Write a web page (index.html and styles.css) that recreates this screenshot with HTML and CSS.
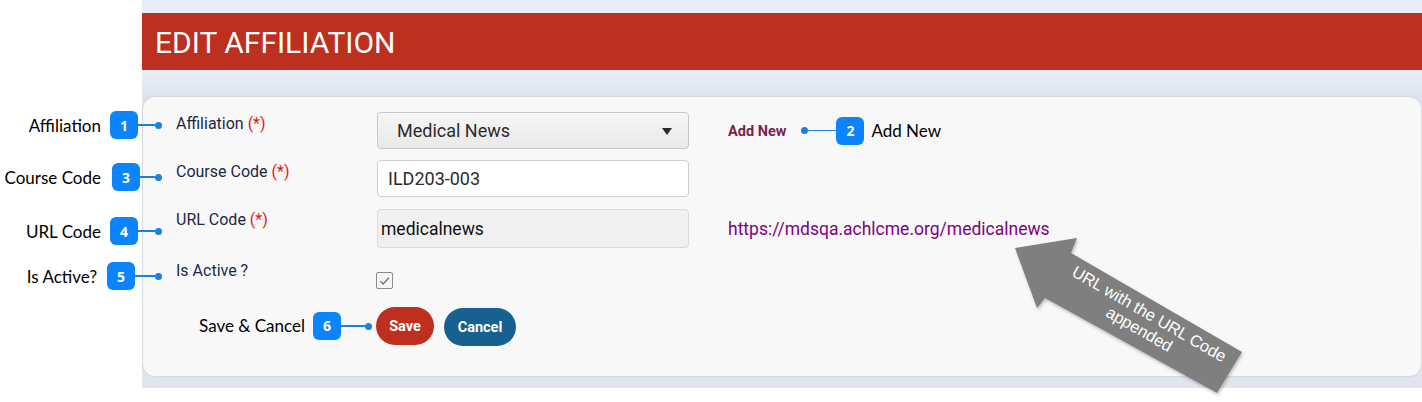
FILE: index.html
```html
<!DOCTYPE html>
<html lang="en">
<head>
<meta charset="utf-8">
<title>Edit Affiliation</title>
<link rel="stylesheet" href="styles.css">
</head>
<body>
<div class="page">
  <div class="gutter"></div>
  <div class="app">
    <div class="header">EDIT AFFILIATION</div>
    <div class="card">
      <div class="row row-aff">
        <div class="callout callout-1">
          <span class="callout-text">Affiliation</span>
          <span class="badge">1</span>
          <span class="line line-17"></span>
          <span class="dot"></span>
        </div>
        <div class="label">Affiliation <span class="req">(*)</span></div>
        <div class="field">
          <div class="select">
            <span>Medical News</span>
            <span class="caret"></span>
          </div>
        </div>
        <div class="extra">
          <a class="add-new">Add New</a>
          <span class="dot dot-gap"></span>
          <span class="line line-28"></span>
          <span class="badge">2</span>
          <span class="callout-text callout-after">Add New</span>
        </div>
      </div>

      <div class="row row-course">
        <div class="callout callout-3">
          <span class="callout-text">Course Code</span>
          <span class="badge">3</span>
          <span class="line line-15"></span>
          <span class="dot"></span>
        </div>
        <div class="label">Course Code <span class="req">(*)</span></div>
        <div class="field">
          <div class="input">ILD203-003</div>
        </div>
      </div>

      <div class="row row-url">
        <div class="callout callout-4">
          <span class="callout-text">URL Code</span>
          <span class="badge">4</span>
          <span class="line line-17"></span>
          <span class="dot"></span>
        </div>
        <div class="label label-url">URL Code <span class="req">(*)</span></div>
        <div class="field">
          <div class="input input-readonly">medicalnews</div>
        </div>
        <div class="extra extra-url">
          <a class="url-link">https://mdsqa.achlcme.org/medicalnews</a>
        </div>
      </div>

      <div class="row row-active">
        <div class="callout callout-5">
          <span class="callout-text">Is Active?</span>
          <span class="badge">5</span>
          <span class="line line-20"></span>
          <span class="dot"></span>
        </div>
        <div class="label">Is Active ?</div>
        <div class="field">
          <span class="checkbox">
            <svg width="16" height="16" viewBox="0 0 16 16"><path d="M3.5 8.2 L6.6 11.2 L12.6 4.6" fill="none" stroke="#7a7a7a" stroke-width="1.6"/></svg>
          </span>
        </div>
      </div>

      <div class="row row-actions">
        <div class="label label-actions">
          <span class="callout-text">Save &amp; Cancel</span>
          <span class="badge badge-6">6</span>
          <span class="line line-24"></span>
          <span class="dot"></span>
        </div>
        <div class="buttons">
          <button class="btn btn-save">Save</button>
          <button class="btn btn-cancel">Cancel</button>
        </div>
      </div>
    </div>
  </div>

  <svg class="arrow" width="270" height="185" viewBox="0 0 270 185">
    <defs>
      <filter id="sh" x="-10%" y="-10%" width="120%" height="120%">
        <feDropShadow dx="1" dy="2" stdDeviation="1.5" flood-color="#000" flood-opacity="0.25"/>
      </filter>
    </defs>
    <polygon points="15,28 77,18 71,33 242,132 217,173 45,78 37,88" fill="#7f7f7f" filter="url(#sh)"/>
    <g transform="translate(144,101) rotate(30)" fill="#ffffff" font-family="'Liberation Sans', Arial, sans-serif" font-size="16.5" text-anchor="middle">
      <text x="1" y="-3">URL with the URL Code</text>
      <text x="0" y="15">appended</text>
    </g>
  </svg>
</div>
</body>
</html>
```

FILE: styles.css
```css
* { box-sizing: border-box; }

html, body {
  margin: 0;
  padding: 0;
  background: #ffffff;
}

body {
  width: 1422px;
  height: 402px;
  font-family: Roboto, "Liberation Sans", Arial, sans-serif;
  overflow: hidden;
}

.page {
  position: relative;
  display: flex;
  width: 1422px;
  height: 402px;
}

.gutter {
  width: 142px;
  flex: none;
}

.app {
  width: 1280px;
  height: 388px;
  flex: none;
  padding-top: 13px;
  background: linear-gradient(to bottom, #e8eef7 0px, #e8eef7 72px, #dfe3eb 97px, #e1e5ed 388px);
  display: flex;
  flex-direction: column;
}

.header {
  height: 57px;
  background: #bd2f1e;
  color: #ffffff;
  font-size: 30px;
  padding-left: 13px;
  display: flex;
  align-items: center;
  padding-top: 1px;
}

.card {
  margin: 27px 1px 0 1px;
  height: 279px;
  background: #f8f8f8;
  border-radius: 12px;
  box-shadow: 0 0 2px rgba(0, 0, 0, 0.18);
  padding: 15px 0 0 33px;
}

.row {
  position: relative;
  display: flex;
  align-items: flex-start;
}

.row-course { margin-top: 11px; }
.row-url { margin-top: 12px; }
.row-active { margin-top: 11px; }
.row-actions { margin-top: 17px; align-items: center; }

.label {
  width: 201px;
  flex: none;
  font-size: 16px;
  line-height: 20px;
  color: #1b2844;
  padding-top: 2px;
}

.label-url { padding-top: 1px; }

.req { color: #e3141b; }

.field {
  width: 312px;
  flex: none;
}

.select {
  height: 37px;
  border: 1px solid #c9c9c9;
  border-radius: 4px;
  background: linear-gradient(to bottom, #f6f6f6, #e9e9e9);
  display: flex;
  align-items: center;
  justify-content: space-between;
  padding: 0 16px 0 19px;
  font-size: 18px;
  color: #2b2b2b;
}

.caret {
  width: 0;
  height: 0;
  border-left: 5px solid transparent;
  border-right: 5px solid transparent;
  border-top: 7px solid #2a2a2a;
  margin-top: 2px;
}

.input {
  height: 37px;
  border: 1px solid #cfcfcf;
  border-radius: 4px;
  background: #ffffff;
  display: flex;
  align-items: center;
  padding-left: 10px;
  font-size: 18px;
  color: #2b2b2b;
}

.input-readonly {
  height: 39px;
  background: #f0f0f0;
  border-color: #dadada;
  padding-left: 3px;
  font-size: 17.5px;
  color: #111111;
}

.checkbox {
  display: flex;
  align-items: center;
  justify-content: center;
  width: 17px;
  height: 17px;
  margin: 13px 0 0 -1px;
  border: 1.5px solid #8c8c8c;
  border-radius: 2px;
  background: #f6f6f6;
}

.extra {
  margin-left: 39px;
  display: flex;
  align-items: center;
  height: 37px;
}

.extra-url { height: 39px; }

.add-new {
  font-size: 14.5px;
  font-weight: 700;
  color: #7b1f4c;
  margin-top: 1px;
}

.url-link {
  font-size: 17.5px;
  color: #800080;
}

.buttons {
  display: flex;
  align-items: center;
  gap: 10px;
  margin-left: -1px;
}

.btn {
  border: none;
  color: #ffffff;
  font-family: Roboto, "Liberation Sans", Arial, sans-serif;
  font-size: 14.5px;
  font-weight: 700;
  height: 38px;
  border-radius: 19px;
  padding: 0;
}

.btn-save { width: 58px; background: #be2f1f; }
.btn-cancel { width: 72px; background: #16618f; margin-top: 2px; }

/* callouts */
.callout {
  position: absolute;
  left: -176px;
  width: 162px;
  height: 28px;
  display: flex;
  align-items: center;
  justify-content: flex-end;
}

.callout-1 { top: -1px; }
.callout-3 { top: 3px; }
.callout-4 { top: 8px; }
.callout-5 { top: 3px; }

.callout-text {
  font-family: Lato, "Open Sans", sans-serif;
  font-size: 17px;
  color: #000000;
  margin-right: 9px;
  white-space: nowrap;
}

.callout-3 .callout-text { margin-right: 11px; }
.callout-5 .callout-text { margin-right: 10px; }

.callout-after {
  margin-right: 0;
  margin-left: 7px;
}

.badge {
  width: 28px;
  height: 28px;
  flex: none;
  border-radius: 6px;
  background: #0b84fd;
  color: #ffffff;
  font-family: "Open Sans", sans-serif;
  font-size: 14px;
  font-weight: 700;
  display: flex;
  align-items: center;
  justify-content: center;
}

.line {
  height: 1.5px;
  background: #1a7fe6;
  flex: none;
}

.line-15 { width: 15px; }
.line-17 { width: 17px; }
.line-20 { width: 20px; }
.line-24 { width: 24px; }
.line-28 { width: 28px; }

.dot {
  width: 7px;
  height: 7px;
  border-radius: 50%;
  background: #1a7fe6;
  flex: none;
}

.dot-gap { margin-left: 15px; }

.label-actions {
  display: flex;
  align-items: center;
  justify-content: flex-end;
  padding: 0 5px 0 0;
}

.label-actions .callout-text { margin-right: 8px; }

.arrow {
  position: absolute;
  left: 1000px;
  top: 220px;
  overflow: visible;
}
```
